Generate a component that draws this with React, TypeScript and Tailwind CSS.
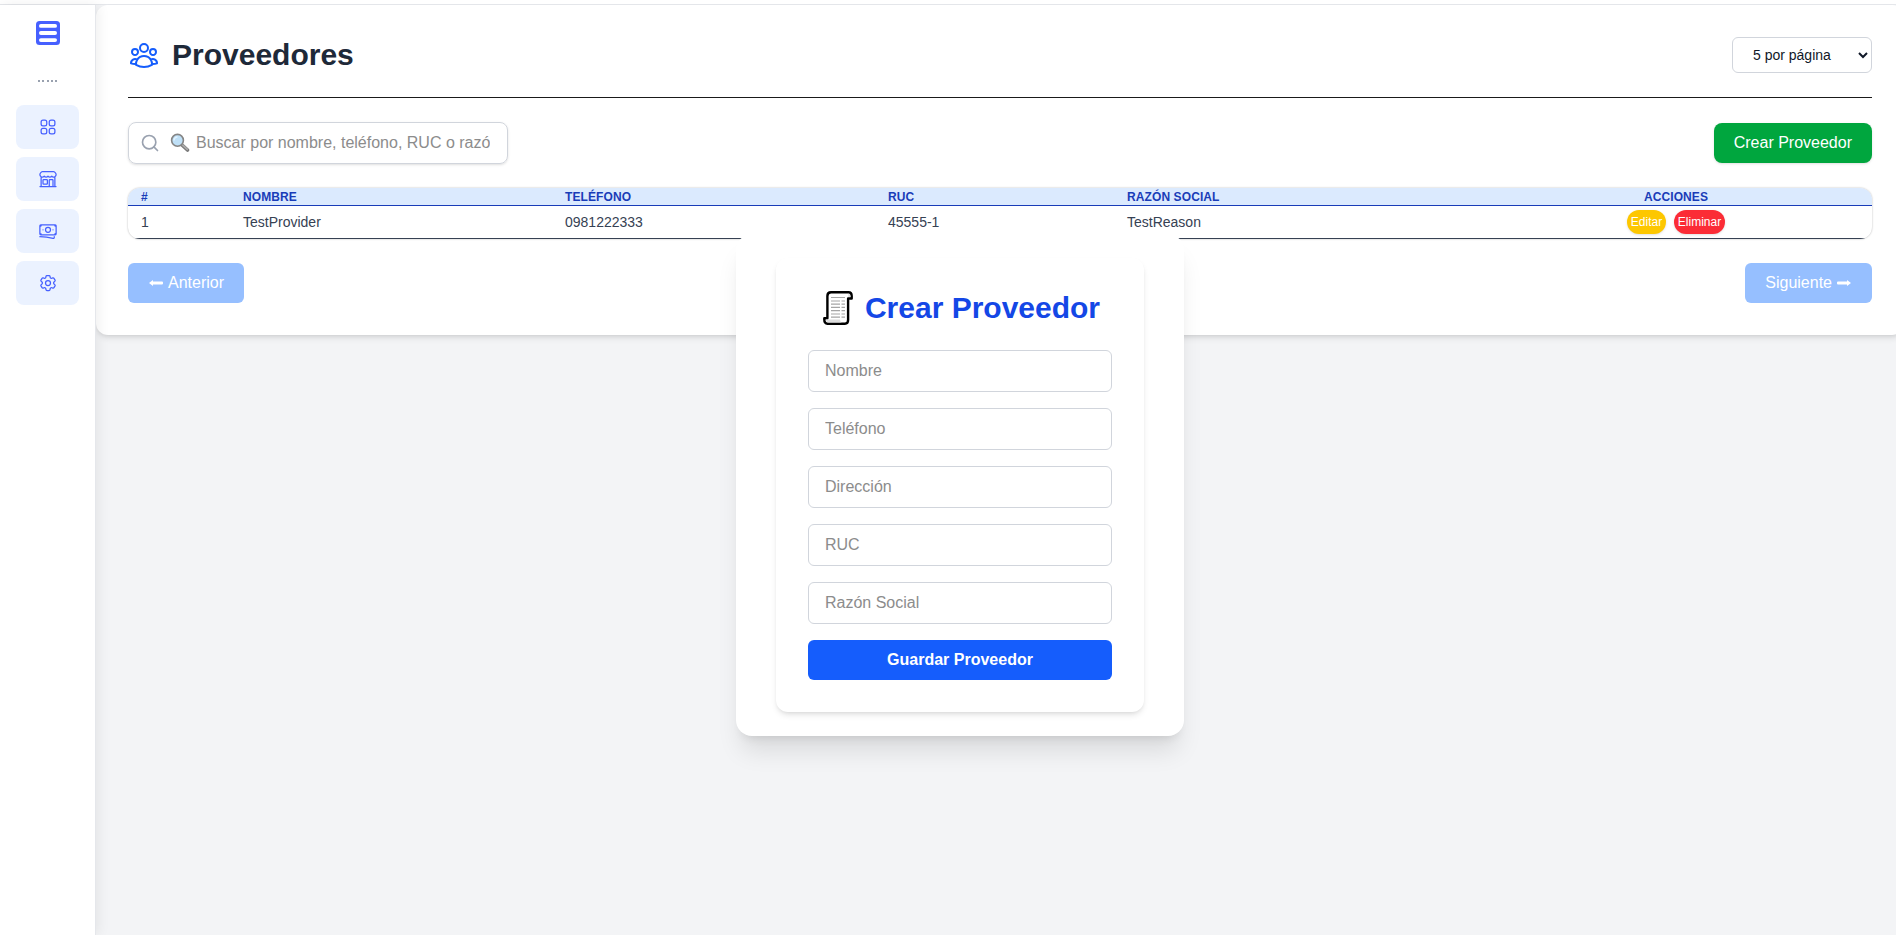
import React from "react";
import {
  HiOutlineBanknotes,
  HiOutlineBuildingStorefront,
  HiOutlineCog6Tooth,
  HiOutlineSquares2X2,
  HiOutlineUserGroup,
} from "react-icons/hi2";
import { Search } from "lucide-react";

const navItems = [
  { id: "panel", Icon: HiOutlineSquares2X2 },
  { id: "tienda", Icon: HiOutlineBuildingStorefront },
  { id: "pagos", Icon: HiOutlineBanknotes },
  { id: "ajustes", Icon: HiOutlineCog6Tooth },
];

const fields = ["Nombre", "Teléfono", "Dirección", "RUC", "Razón Social"];

function Logo() {
  return (
    <svg viewBox="0 0 24 24" className="h-6 w-6">
      <rect width="24" height="24" rx="3.500" fill="#4660ff" />
      <rect x="3" y="3" width="18" height="3.800" rx="1.900" fill="#fff" />
      <rect x="3" y="10.100" width="18" height="3.800" rx="1.900" fill="#fff" />
      <rect x="3" y="17.200" width="18" height="3.800" rx="1.900" fill="#fff" />
    </svg>
  );
}

function LeftArrow() {
  return (
    <svg viewBox="0 0 14 6" className="mr-[5px] ml-px h-1.5 w-3.5" fill="currentColor">
      <path d="M0 3 4 0v1.500h9a1 1 0 0 1 1 1v1a1 1 0 0 1-1 1H4V6Z" />
    </svg>
  );
}

function RightArrow() {
  return (
    <svg viewBox="0 0 14 6" className="mr-px ml-[5px] h-1.5 w-3.5" fill="currentColor">
      <path d="M14 3 10 0v1.500H1a1 1 0 0 0-1 1v1a1 1 0 0 0 1 1h9V6Z" />
    </svg>
  );
}

function Magnifier() {
  return (
    <svg viewBox="0 0 20 20" className="h-5 w-5 shrink-0">
      <path d="m11.500 11.500 6 5.500" stroke="#777" strokeWidth="3.600" strokeLinecap="round" />
      <path d="m12.500 12 4.800 4.400" stroke="#aaa" strokeWidth="1.800" strokeLinecap="round" />
      <circle cx="7.500" cy="7.300" r="5.900" fill="#bfe0f7" stroke="#858585" strokeWidth="1.600" />
      <path d="M4 7.500A3.500 3.500 0 0 1 7.500 4" stroke="#e2f3ff" strokeWidth="1.500" fill="none" />
    </svg>
  );
}

function Scroll() {
  return (
    <svg viewBox="0 0 30 34" className="h-[34px] w-[30px] shrink-0">
      <path
        d="M8 1.300h17.500c2.200 0 3.200 1.600 3.200 3.600v2.600h-3.600V29c0 2.200-1 3.700-3.200 3.700H4.500C2.300 32.700 1.300 31 1.300 28.500v-1.300h3.100V5c0-2.400 1.300-3.700 3.600-3.700Z"
        fill="#fff"
        stroke="#000"
        strokeWidth="2.400"
        strokeLinejoin="round"
      />
      <path d="M3 28.500h14c0 1.600.8 2.700 2 3H5.500c-1.600 0-2.500-1.400-2.500-3ZM25.300 2.700c1.500 0 2.200 1 2.200 3.400h-2.200Z" fill="#ddd" />
      <path
        d="M8 6.500h14M8 10h9M18.500 10H22M8 13.200h9M18.500 13.200H22M8 16.400h9M18.500 16.400H22M8 19.600h9M18.500 19.600H22M8 23h9M18.500 23H22M8 26.200h9M18.500 26.200H22"
        stroke="#a5a5a5"
        strokeWidth="1.200"
      />
    </svg>
  );
}

function Sidebar() {
  return (
    <aside className="flex w-24 shrink-0 flex-col items-center border-r border-gray-200 bg-white">
      <div className="flex pt-4">
        <Logo />
      </div>
      <div className="mt-8 flex h-2 items-center gap-[2.400px]">
        {[0, 1, 2, 3, 4].map((n) => (
          <span key={n} className="h-0.5 w-0.5 bg-gray-400" />
        ))}
      </div>
      <nav className="mt-5 flex flex-col gap-2">
        {navItems.map(({ id, Icon }) => (
          <a key={id} className="flex h-11 w-[63px] items-center justify-center rounded-lg bg-[#ebf2ff] text-[#4660ff]">
            <Icon className="h-5 w-5" />
          </a>
        ))}
      </nav>
    </aside>
  );
}

const headCell = "border-b border-blue-800 py-0 pr-2 pl-[13px] leading-4";
const bodyCell = "border-b border-gray-700 py-0 pr-2 pl-[13px]";

function ProvidersTable() {
  return (
    <div className="mt-6 h-[51px] overflow-hidden rounded-xl shadow-[0_0_2px_rgba(0,0,0,0.3)]">
      <table className="w-full table-fixed border-separate border-spacing-0 text-left text-sm text-gray-700">
        <colgroup>
          <col className="w-[102px]" />
          <col className="w-[322px]" />
          <col className="w-[323px]" />
          <col className="w-[239px]" />
          <col className="w-[366px]" />
          <col />
        </colgroup>
        <thead>
          <tr className="h-[18px] bg-blue-100 text-xs tracking-[0.1px] text-blue-800 uppercase">
            <th className={headCell}>#</th>
            <th className={headCell}>Nombre</th>
            <th className={headCell}>Teléfono</th>
            <th className={headCell}>RUC</th>
            <th className={headCell}>Razón Social</th>
            <th className="border-b border-blue-800 px-3 py-0 text-center leading-4">Acciones</th>
          </tr>
        </thead>
        <tbody>
          <tr className="h-[33px]">
            <td className={bodyCell}>1</td>
            <td className={bodyCell}>TestProvider</td>
            <td className={bodyCell}>0981222333</td>
            <td className={bodyCell}>45555-1</td>
            <td className={bodyCell}>TestReason</td>
            <td className="border-b border-gray-700 px-3 py-0">
              <div className="flex justify-center gap-2">
                <button className="h-6 w-[39px] rounded-full bg-[#fdc700] text-xs text-white shadow-sm">Editar</button>
                <button className="h-6 w-[51px] rounded-full bg-[#fb2c36] text-xs text-white shadow-sm">Eliminar</button>
              </div>
            </td>
          </tr>
        </tbody>
      </table>
    </div>
  );
}

function CreateDialog() {
  return (
    <div className="absolute top-[234px] left-[736px] w-[448px] rounded-2xl bg-white px-10 pt-6 pb-6 shadow-xl">
      <div className="rounded-xl bg-white p-8 shadow-md">
        <h2 className="flex h-9 items-center justify-center pl-[3px] text-3xl leading-9 font-bold text-blue-700">
          <Scroll />
          <span className="ml-3">Crear Proveedor</span>
        </h2>
        <form className="mt-6 flex flex-col gap-4">
          {fields.map((name) => (
            <input
              key={name}
              placeholder={name}
              className="h-[42px] w-full rounded-md border border-gray-300 px-4 text-base placeholder:text-[#8c8c8c]"
            />
          ))}
          <button type="button" className="h-10 rounded-md bg-[#155dfc] font-bold text-white">
            Guardar Proveedor
          </button>
        </form>
      </div>
    </div>
  );
}

export default function App() {
  return (
    <div className="relative flex h-[935px] w-full flex-col overflow-hidden bg-gray-100 font-['Liberation_Sans',sans-serif]">
      <div className="h-[5px] shrink-0 border-b border-gray-200 bg-white" />
      <div className="flex min-h-0 flex-1">
        <div className="z-10 flex shadow-[2px_0_12px_rgba(0,0,0,0.07)]">
          <Sidebar />
        </div>
        <main className="-mr-2 h-[330px] min-w-0 flex-1 rounded-xl bg-white pt-8 pr-8 pl-8 shadow-md">
          <header className="flex h-[61px] items-start justify-between border-b border-[#1a1a1a]">
            <h1 className="flex items-center gap-3 text-3xl leading-9 font-bold text-gray-800">
              <HiOutlineUserGroup className="h-8 w-8 text-[#155dfc]" />
              Proveedores
            </h1>
            <select className="h-9 w-[140px] rounded-md border border-gray-300 bg-white px-4 text-sm text-gray-900">
              <option>5 por página</option>
            </select>
          </header>
          <div className="mt-6 flex items-center justify-between">
            <div className="flex h-[42px] w-[380px] items-center rounded-lg border border-gray-300 pr-3 pl-[11px] shadow-sm">
              <Search className="h-5 w-5 shrink-0 text-gray-400" />
              <span className="ml-2.5 flex">
                <Magnifier />
              </span>
              <span className="ml-1.5 overflow-hidden whitespace-nowrap text-[#8c8c8c]">
                Buscar por nombre, teléfono, RUC o razó
              </span>
            </div>
            <button className="h-10 rounded-lg bg-[#00a63e] px-5 text-white shadow-sm">Crear Proveedor</button>
          </div>
          <ProvidersTable />
          <div className="mt-6 flex justify-between">
            <button className="flex h-10 items-center rounded-md bg-[#96bfff] px-5 text-white">
              <LeftArrow />
              Anterior
            </button>
            <button className="flex h-10 items-center rounded-md bg-[#96bfff] px-5 text-white">
              Siguiente
              <RightArrow />
            </button>
          </div>
        </main>
      </div>
      <CreateDialog />
    </div>
  );
}
